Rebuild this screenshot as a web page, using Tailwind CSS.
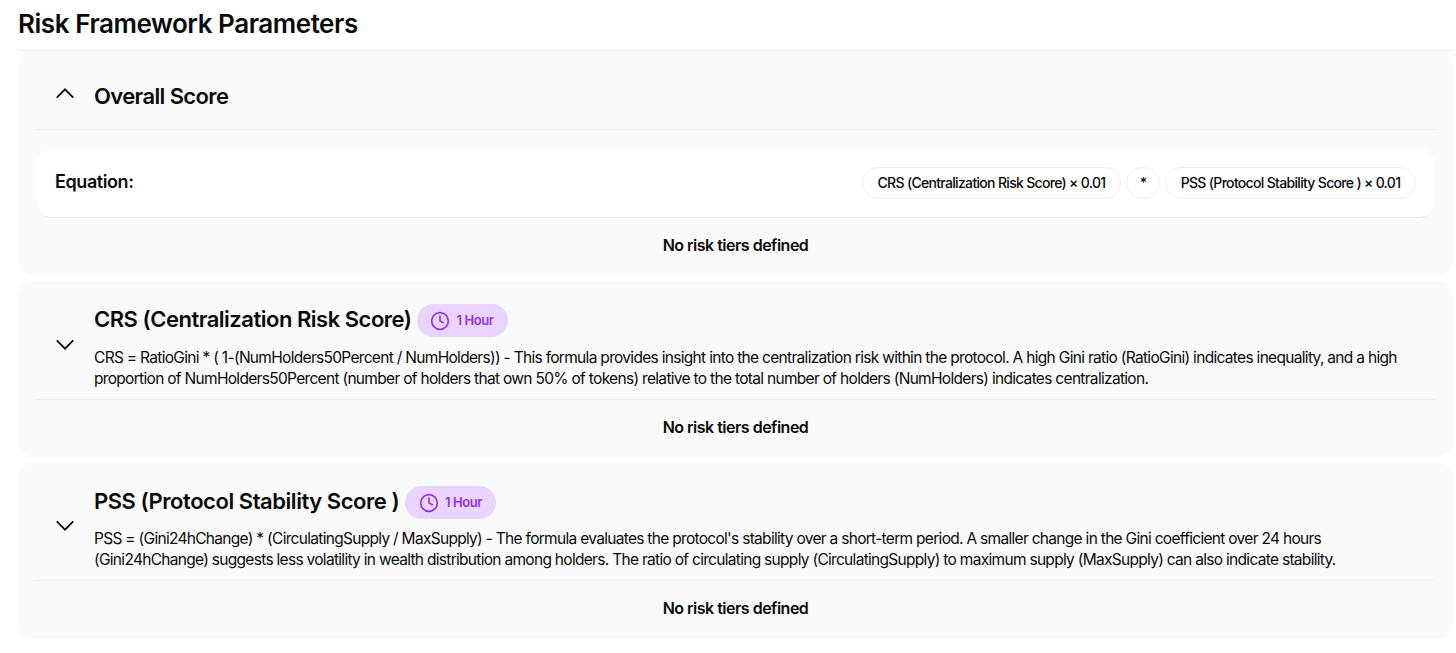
<!DOCTYPE html>
<html>
<head>
<meta charset="utf-8">
<script src="https://cdn.jsdelivr.net/npm/@tailwindcss/browser@4"></script>
</head>
<body class="bg-white text-[#0a0a0a] font-['Inter',sans-serif] overflow-hidden">
<div class="w-[1456px] h-[653px] pl-[18px] pr-[3px]">
  <div class="h-[51px] border-b border-[#ebebeb] flex items-center pb-[3px]">
    <h1 class="text-[26px] leading-[32px] font-semibold tracking-[-0.45px]">Risk Framework Parameters</h1>
  </div>
  <div class="flex flex-col gap-[5px]">
    <section class="bg-[#fafafa] rounded-[16px] h-[225px] px-[18px] flex flex-col">
      <div class="h-[79px] border-b border-[#ededed] flex items-center pl-[18px] gap-[18px]">
        <svg class="w-[22px] h-[22px] mt-[7px]" viewBox="0 0 24 24" fill="none" stroke="#0a0a0a" stroke-width="2"><path d="M3 16 L12 7 L21 16"/></svg>
        <h2 class="text-[22px] leading-[28px] font-semibold tracking-[-0.62px] pt-[12px]">Overall Score</h2>
      </div>
      <div class="mt-[19px] h-[69px] bg-white rounded-[16px] border-b border-[#ededed] flex items-center justify-between pl-[19px] pr-[19px]">
        <span class="text-[18px] pb-[4px] font-semibold tracking-[-0.42px]">Equation:</span>
        <div class="flex gap-[5px] text-[14px] font-medium tracking-[-0.68px]">
          <span class="h-[32px] w-[259px] pb-[2px] justify-center flex items-center rounded-full border border-[#ededed]">CRS (Centralization Risk Score) × 0.01</span>
          <span class="h-[32px] w-[34px] pb-[2px] justify-center flex items-center rounded-full border border-[#ededed]">*</span>
          <span class="h-[32px] w-[251px] pb-[2px] justify-center flex items-center rounded-full border border-[#ededed]">PSS (Protocol Stability Score ) × 0.01</span>
        </div>
      </div>
      <div class="h-[56px] pb-[2px] flex items-center justify-center text-[16px] font-semibold tracking-[-0.5px]">No risk tiers defined</div>
    </section>

    <section class="bg-[#fafafa] rounded-[16px] h-[176px] px-[18px] flex flex-col">
      <div class="h-[119px] border-b border-[#ededed] flex items-start pl-[18px] gap-[18px] pt-[23px]">
        <svg class="w-[22px] h-[22px] mt-[29px]" viewBox="0 0 24 24" fill="none" stroke="#0a0a0a" stroke-width="2"><path d="M3 8 L12 17 L21 8"/></svg>
        <div class="flex-1">
          <div class="flex items-center gap-[5px]">
            <h2 class="text-[22px] leading-[28px] pb-[3px] font-semibold tracking-[-0.49px]">CRS (Centralization Risk Score)</h2>
            <span class="h-[33px] w-[91px] rounded-full bg-[#e9d5ff] flex items-center justify-center gap-[6px] text-[#9333ea] text-[13px] font-semibold tracking-[-0.4px]">
              <svg class="w-[20px] h-[20px]" viewBox="0 0 24 24" fill="none" stroke="#9333ea" stroke-width="2" stroke-linecap="round" stroke-linejoin="round"><circle cx="12" cy="12" r="10"/><path d="M12 6v6l4 2"/></svg>1 Hour
            </span>
          </div>
          <p class="mt-[10px] text-[15.5px] leading-[21px] tracking-[-0.69px]">CRS = RatioGini * ( 1-(NumHolders50Percent / NumHolders)) - This formula provides insight into the centralization risk within the protocol. A high Gini ratio (RatioGini) indicates inequality, and a high proportion of NumHolders50Percent (number of holders that own 50% of tokens) relative to the total number of holders (NumHolders) indicates centralization.</p>
        </div>
      </div>
      <div class="h-[56px] pb-[2px] flex items-center justify-center text-[16px] font-semibold tracking-[-0.5px]">No risk tiers defined</div>
    </section>

    <section class="bg-[#fafafa] rounded-[16px] h-[177px] px-[18px] flex flex-col">
      <div class="h-[119px] border-b border-[#ededed] flex items-start pl-[18px] gap-[18px] pt-[24px]">
        <svg class="w-[22px] h-[22px] mt-[28px]" viewBox="0 0 24 24" fill="none" stroke="#0a0a0a" stroke-width="2"><path d="M3 8 L12 17 L21 8"/></svg>
        <div class="flex-1">
          <div class="flex items-center gap-[5px]">
            <h2 class="text-[22px] leading-[28px] w-[306px] whitespace-nowrap pb-[3px] font-semibold tracking-[-0.45px]">PSS (Protocol Stability Score )</h2>
            <span class="h-[33px] w-[91px] rounded-full bg-[#e9d5ff] flex items-center justify-center gap-[6px] text-[#9333ea] text-[13px] font-semibold tracking-[-0.4px]">
              <svg class="w-[20px] h-[20px]" viewBox="0 0 24 24" fill="none" stroke="#9333ea" stroke-width="2" stroke-linecap="round" stroke-linejoin="round"><circle cx="12" cy="12" r="10"/><path d="M12 6v6l4 2"/></svg>1 Hour
            </span>
          </div>
          <p class="mt-[9px] text-[15.5px] leading-[21px] tracking-[-0.7px]">PSS = (Gini24hChange) * (CirculatingSupply / MaxSupply) - The formula evaluates the protocol's stability over a short-term period. A smaller change in the Gini coefficient over 24 hours (Gini24hChange) suggests less volatility in wealth distribution among holders. The ratio of circulating supply (CirculatingSupply) to maximum supply (MaxSupply) can also indicate stability.</p>
        </div>
      </div>
      <div class="h-[57px] pb-[3px] flex items-center justify-center text-[16px] font-semibold tracking-[-0.5px]">No risk tiers defined</div>
    </section>
  </div>
</div>
</body>
</html>
